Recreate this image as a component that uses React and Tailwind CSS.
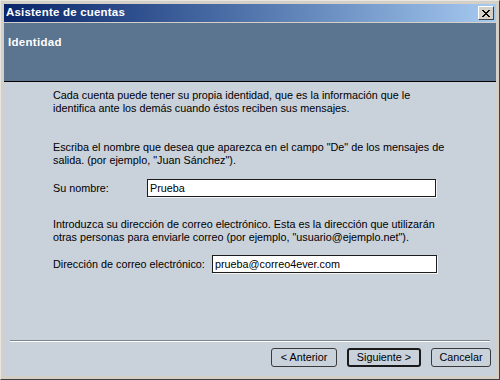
import React from 'react';

const font = { fontFamily: '"Liberation Sans", Arial, sans-serif' };

function CloseButton() {
  return (
    <div className="w-[16px] h-[14px] bg-[#d4d0c8] border border-t-white border-l-white border-r-[#404040] border-b-[#404040] flex items-center justify-center">
      <svg width="8" height="7" viewBox="0 0 8 7" shapeRendering="crispEdges">
        <path d="M0 0h2v1H0zM6 0h2v1H6zM1 1h2v1H1zM5 1h2v1H5zM2 2h4v1H2zM3 3h2v1H3zM2 4h4v1H2zM1 5h2v1H1zM5 5h2v1H5zM0 6h2v1H0zM6 6h2v1H6z" fill="#000" />
      </svg>
    </div>
  );
}

function WizButton({ children, w, primary }) {
  return (
    <button
      className={`h-[19px] ${w} rounded-[3px] bg-[#c9d1db] text-[10.8px] font-normal leading-none text-black flex items-center justify-center ${primary ? 'border-2 border-[#1a1a1a]' : 'border border-[#3a3a3a]'}`}
      style={font}
    >
      {children}
    </button>
  );
}

function Field({ value, w }) {
  return (
    <div className={`h-[18px] ${w} bg-white border border-[#1c1c1c] shadow-[1px_1px_0_#f4f4f4] pl-[2px] flex items-center text-[10.8px] text-black`}>
      {value}
    </div>
  );
}

export default function App() {
  return (
    <div className="w-[500px] h-[380px] bg-[#d4d0c8] border border-t-[#e8e6e0] border-l-[#e8e6e0] border-r-[#404040] border-b-[#404040] p-[3px] flex flex-col overflow-hidden" style={font}>
      {/* title bar */}
      <div className="h-[18px] shrink-0 flex items-center justify-between pl-[2px] pr-[2px] bg-gradient-to-r from-[#0a246a] to-[#a6caf0]">
        <span className="text-white font-bold text-[11.5px] tracking-[0.2px]">Asistente de cuentas</span>
        <CloseButton />
      </div>
      <div className="h-[1px] shrink-0" />

      {/* header */}
      <div className="h-[59px] shrink-0 bg-[#5b7591] border-b border-black pl-[4px] pt-[6px]">
        <span className="text-white font-bold text-[11.5px] tracking-[0.3px]">Identidad</span>
      </div>

      {/* body */}
      <div className="flex-1 bg-[#c9d1db] flex flex-col text-[10.8px] leading-[13px] text-black">
        <div className="pl-[49px] pt-[7px] whitespace-nowrap">
          <p>
            Cada cuenta puede tener su propia identidad, que es la información que le<br />
            identifica ante los demás cuando éstos reciben sus mensajes.
          </p>
          <p className="mt-[26px]">
            Escriba el nombre que desea que aparezca en el campo "De" de los mensajes de<br />
            salida. (por ejemplo, "Juan Sánchez").
          </p>
          <div className="mt-[12px] flex items-center">
            <span className="w-[94px]">Su nombre:</span>
            <Field value="Prueba" w="w-[289px]" />
          </div>
          <p className="mt-[21px]">
            Introduzca su dirección de correo electrónico. Esta es la dirección que utilizarán<br />
            otras personas para enviarle correo (por ejemplo, "usuario@ejemplo.net").
          </p>
          <div className="mt-[11px] flex items-center">
            <span className="w-[159px]">Dirección de correo electrónico:</span>
            <Field value="prueba@correo4ever.com" w="w-[225px]" />
          </div>
        </div>

        <div className="flex-1" />

        <div className="mx-[6px] h-[2px] shrink-0 border-t border-[#7d8690] border-b border-b-white" />
        <div className="h-[34px] shrink-0 flex items-center justify-end gap-[10px] pr-[5px] pb-[4px]">
          <WizButton w="w-[66px]">&lt; Anterior</WizButton>
          <WizButton w="w-[74px]" primary>Siguiente &gt;</WizButton>
          <WizButton w="w-[60px]">Cancelar</WizButton>
        </div>
      </div>
    </div>
  );
}
